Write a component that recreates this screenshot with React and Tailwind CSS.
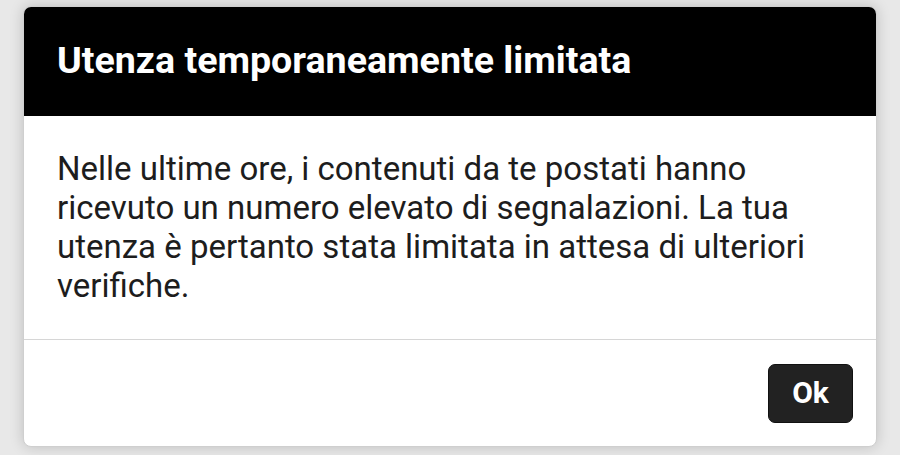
export default function App() {
  return (
    <div className="w-[900px] h-[455px] overflow-hidden bg-[#e8e8e8] relative" style={{ fontFamily: 'Roboto, "Noto Sans", sans-serif' }}>
      <div className="pt-[6px] px-[23px]">
        <div className="w-[854px] h-[441px] rounded-[8px] overflow-hidden bg-white shadow-[0_0_14px_rgba(0,0,0,0.18)] flex flex-col border border-[#cfcfcf]">
          <div className="h-[109px] bg-black flex items-center px-[33px] shrink-0">
            <h1 className="text-white font-bold text-[37.6px] leading-none pb-[2px]">Utenza temporaneamente limitata</h1>
          </div>
          <div className="h-[224px] shrink-0 px-[33px] pt-[33px] border-b border-[#d6d6d6]">
            <p className="text-[#1d1d1d] text-[33px] leading-[39px]">
              Nelle ultime ore, i contenuti da te postati hanno ricevuto un numero elevato di segnalazioni. La tua utenza è pertanto stata limitata in attesa di ulteriori verifiche.
            </p>
          </div>
          <div className="flex-1 flex items-center justify-end pr-[23px]">
            <button className="w-[85px] h-[59px] rounded-[7px] bg-[#222222] border border-[#111] text-white font-bold text-[30px] leading-none">Ok</button>
          </div>
        </div>
      </div>
    </div>
  );
}
